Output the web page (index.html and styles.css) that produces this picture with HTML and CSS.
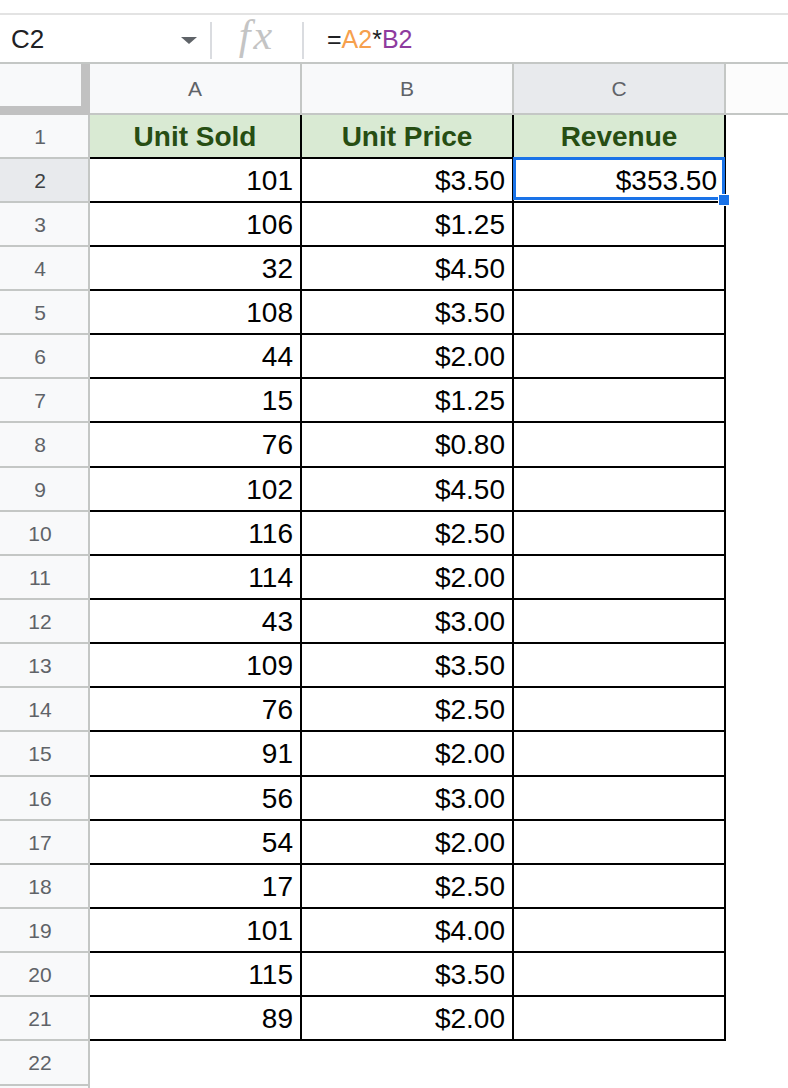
FILE: index.html
```html
<html>
	<head>
		<link rel="stylesheet" href="styles.css">
	</head>
	<body>
		<div class="topGap"></div>
		<div class="fbar">
			<div class="nameBox">
				<span class="nameTxt">C2</span>
				<span class="ddArrow"></span>
			</div>
			<div class="sep"></div>
			<div class="fxIcon">fx</div>
			<div class="sep"></div>
			<div class="formula">=<span class="ref1">A2</span>*<span class="ref2">B2</span></div>
		</div>
		<div class="sheet">
			<!-- column headers -->
			<div class="corner"></div>
			<div class="ch">A</div>
			<div class="ch">B</div>
			<div class="ch chSel">C</div>
			<div class="ch chLast"></div>

			<!-- row 1 -->
			<div class="rh">1</div>
			<div class="cell head">Unit Sold</div>
			<div class="cell head">Unit Price</div>
			<div class="cell head">Revenue</div>
			<div class="blank"></div>

			<div class="rh rhSel">2</div>
			<div class="cell">101</div>
			<div class="cell">$3.50</div>
			<div class="cell selCell">$353.50<div class="sel"><div class="handle"></div></div></div>
			<div class="blank"></div>

			<div class="rh">3</div>
			<div class="cell">106</div>
			<div class="cell">$1.25</div>
			<div class="cell"></div>
			<div class="blank"></div>

			<div class="rh">4</div>
			<div class="cell">32</div>
			<div class="cell">$4.50</div>
			<div class="cell"></div>
			<div class="blank"></div>

			<div class="rh">5</div>
			<div class="cell">108</div>
			<div class="cell">$3.50</div>
			<div class="cell"></div>
			<div class="blank"></div>

			<div class="rh">6</div>
			<div class="cell">44</div>
			<div class="cell">$2.00</div>
			<div class="cell"></div>
			<div class="blank"></div>

			<div class="rh">7</div>
			<div class="cell">15</div>
			<div class="cell">$1.25</div>
			<div class="cell"></div>
			<div class="blank"></div>

			<div class="rh">8</div>
			<div class="cell">76</div>
			<div class="cell">$0.80</div>
			<div class="cell"></div>
			<div class="blank"></div>

			<div class="rh">9</div>
			<div class="cell">102</div>
			<div class="cell">$4.50</div>
			<div class="cell"></div>
			<div class="blank"></div>

			<div class="rh">10</div>
			<div class="cell">116</div>
			<div class="cell">$2.50</div>
			<div class="cell"></div>
			<div class="blank"></div>

			<div class="rh">11</div>
			<div class="cell">114</div>
			<div class="cell">$2.00</div>
			<div class="cell"></div>
			<div class="blank"></div>

			<div class="rh">12</div>
			<div class="cell">43</div>
			<div class="cell">$3.00</div>
			<div class="cell"></div>
			<div class="blank"></div>

			<div class="rh">13</div>
			<div class="cell">109</div>
			<div class="cell">$3.50</div>
			<div class="cell"></div>
			<div class="blank"></div>

			<div class="rh">14</div>
			<div class="cell">76</div>
			<div class="cell">$2.50</div>
			<div class="cell"></div>
			<div class="blank"></div>

			<div class="rh">15</div>
			<div class="cell">91</div>
			<div class="cell">$2.00</div>
			<div class="cell"></div>
			<div class="blank"></div>

			<div class="rh">16</div>
			<div class="cell">56</div>
			<div class="cell">$3.00</div>
			<div class="cell"></div>
			<div class="blank"></div>

			<div class="rh">17</div>
			<div class="cell">54</div>
			<div class="cell">$2.00</div>
			<div class="cell"></div>
			<div class="blank"></div>

			<div class="rh">18</div>
			<div class="cell">17</div>
			<div class="cell">$2.50</div>
			<div class="cell"></div>
			<div class="blank"></div>

			<div class="rh">19</div>
			<div class="cell">101</div>
			<div class="cell">$4.00</div>
			<div class="cell"></div>
			<div class="blank"></div>

			<div class="rh">20</div>
			<div class="cell">115</div>
			<div class="cell">$3.50</div>
			<div class="cell"></div>
			<div class="blank"></div>

			<div class="rh">21</div>
			<div class="cell">89</div>
			<div class="cell">$2.00</div>
			<div class="cell"></div>
			<div class="blank"></div>

			<div class="rh">22</div>
			<div class="blank"></div>
			<div class="blank"></div>
			<div class="blank"></div>
			<div class="blank"></div>

			<div class="rh"></div>
			<div class="blank"></div>
			<div class="blank"></div>
			<div class="blank"></div>
			<div class="blank"></div>
		</div>
	</body>
</html>
```
FILE: styles.css
```css
body {
	margin: 0;
	background: #ffffff;
	font-family: "Liberation Sans", Arial, sans-serif;
	overflow: hidden;
	height: 1088px;
}

.topGap {
	height: 13px;
	border-bottom: 2px solid #e3e3e3;
}

.fbar {
	display: flex;
	align-items: center;
	height: 47px;
	border-bottom: 2px solid #c4c7c5;
}

.nameBox {
	width: 210px;
	display: flex;
	align-items: center;
	box-sizing: border-box;
	padding-left: 11px;
	padding-right: 13px;
}
.nameTxt {
	flex: 1;
	font-size: 26px;
	color: #202124;
	margin-top: 2px;
}
.ddArrow {
	width: 0;
	height: 0;
	border-left: 8px solid transparent;
	border-right: 8px solid transparent;
	border-top: 7px solid #5f6368;
	margin-top: 3px;
}

.sep {
	width: 2px;
	height: 37px;
	background: #dadce0;
	margin-top: 3px;
}

.fxIcon {
	width: 90px;
	text-align: center;
	font-family: "Liberation Serif", "Times New Roman", serif;
	font-style: italic;
	font-size: 42px;
	letter-spacing: 3px;
	color: #c4c4c4;
	margin-top: -8px;
}

.formula {
	padding-left: 23px;
	font-size: 25px;
	color: #202124;
	margin-top: 2px;
}
.ref1 {
	color: #f6a04d;
}
.ref2 {
	color: #8e3b9e;
}

.sheet {
	display: grid;
	grid-template-columns: 90px 212px 212px 212px 1fr;
	grid-template-rows: 50.5px repeat(23, 44.15px);
}
.sheet > div {
	box-sizing: border-box;
}

.corner {
	background: #f8f9fa;
	border-right: 9px solid #c1c1c1;
	border-bottom: 9px solid #c1c1c1;
}

.ch {
	background: #f8f9fa;
	border-right: 2px solid #c4c7c5;
	border-bottom: 2px solid #c4c7c5;
	font-size: 21px;
	color: #5f6368;
	text-align: center;
	line-height: 50px;
}
.chSel {
	background: #e8eaed;
}
.chLast {
	background: #fcfcfc;
	border-right: none;
}

.rh {
	background: #f8f9fa;
	border-right: 2px solid #c4c7c5;
	border-bottom: 2px solid #c4c7c5;
	font-size: 21px;
	color: #5f6368;
	text-align: center;
	padding-right: 8px;
	line-height: 43px;
}
.rhSel {
	background: #e8eaed;
	color: #3c4043;
}

.cell {
	border-right: 2px solid #000000;
	border-bottom: 2px solid #000000;
	font-size: 28px;
	color: #000000;
	text-align: right;
	padding-right: 7px;
	line-height: 44px;
	white-space: nowrap;
}

.head {
	background: #d9ead3;
	color: #274e13;
	font-weight: bold;
	text-align: center;
	padding-right: 0;
}

.selCell {
	position: relative;
}
.sel {
	position: absolute;
	top: -2px;
	left: -1px;
	right: -1px;
	bottom: 1px;
	border: 3px solid #1a73e8;
}
.handle {
	position: absolute;
	right: -8px;
	bottom: -9px;
	width: 10px;
	height: 10px;
	background: #1a73e8;
	border: 1px solid #ffffff;
}

.blank {
	background: #ffffff;
}
```
